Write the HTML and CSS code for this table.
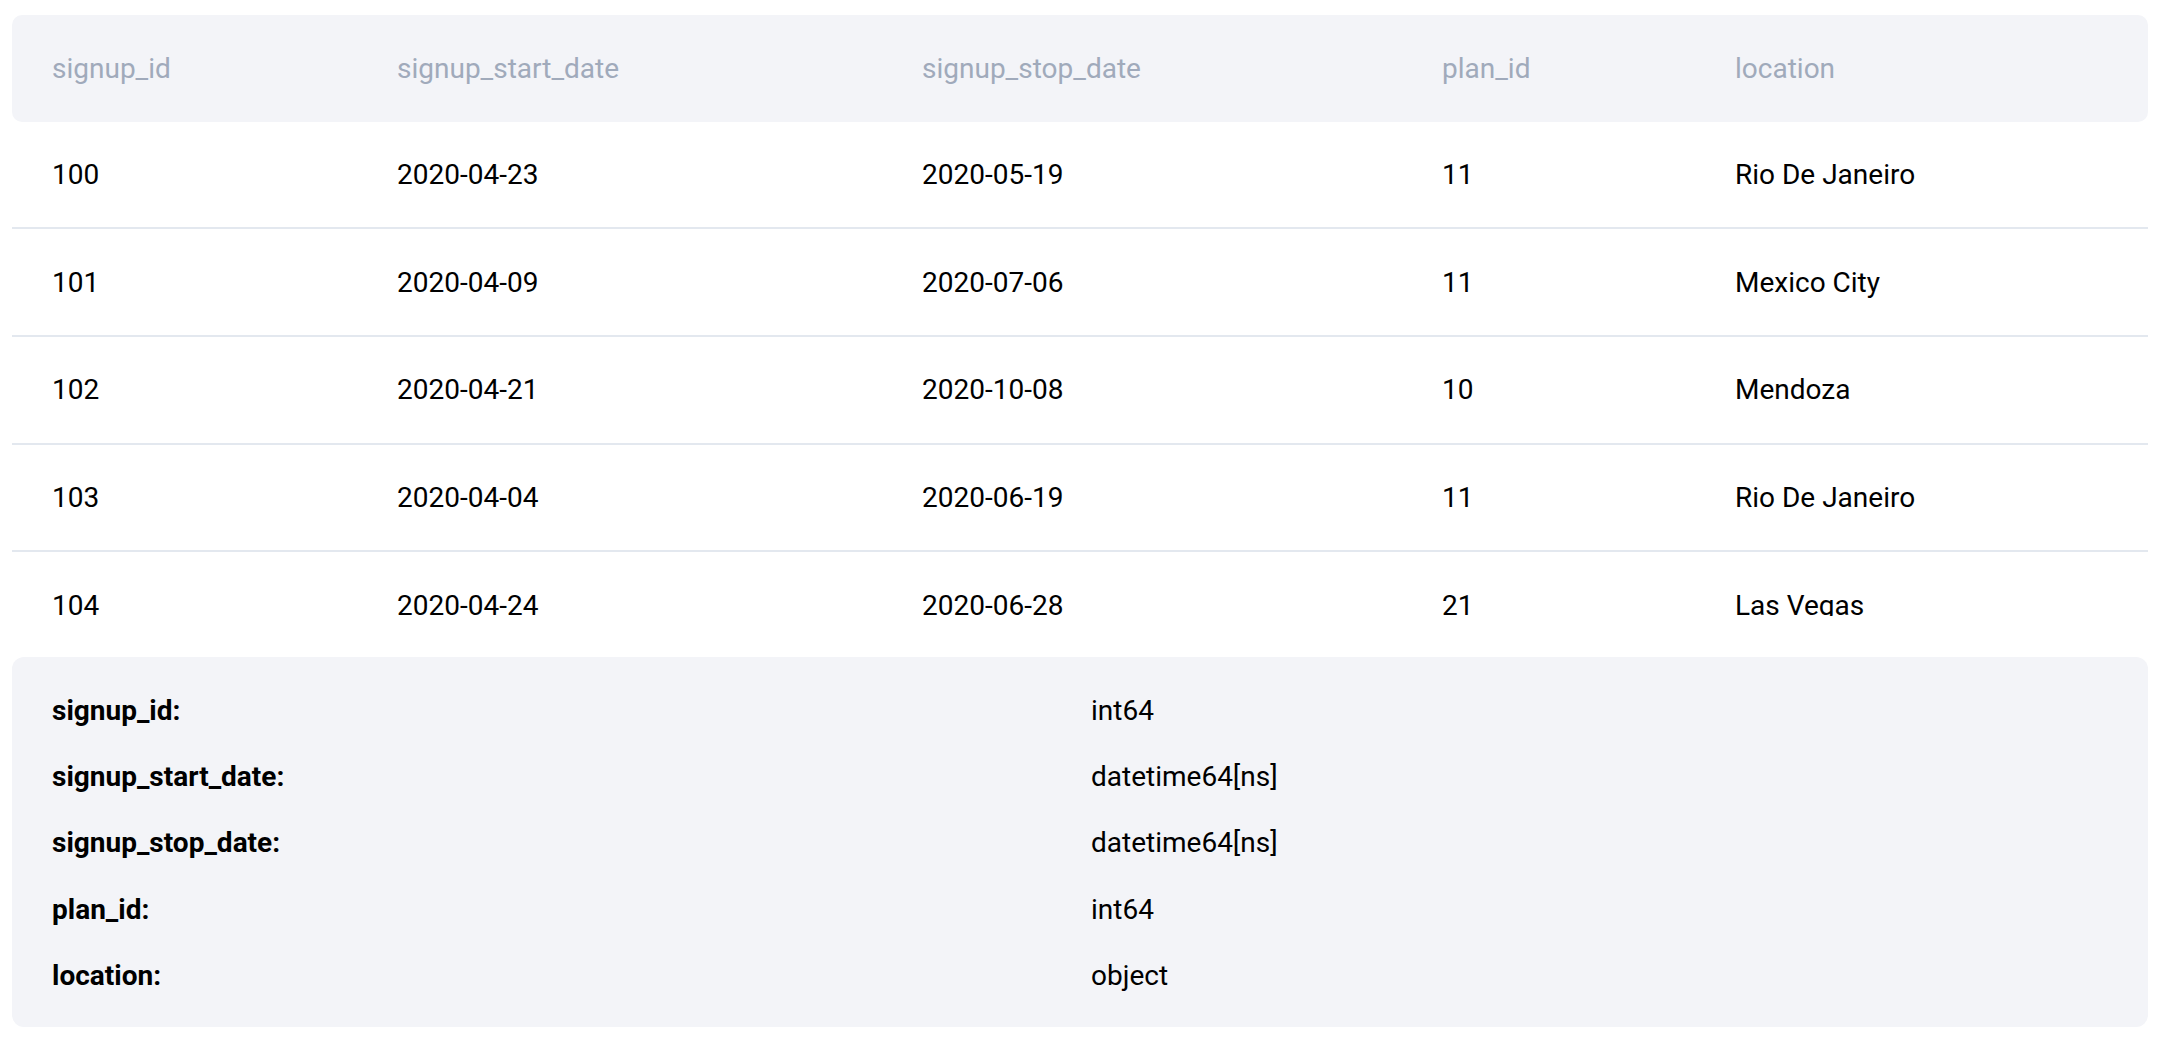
FILE: index.html
```html
<!DOCTYPE html>
<html lang="en">
  <head>
    <meta charset="UTF-8" />
    <meta name="viewport" content="width=device-width, initial-scale=1.0" />
    <title>signups</title>
    <link rel="stylesheet" href="styles.css">
  </head>

  <body>
    <div class="frame">
      <!-- 数据预览 -->
      <div class="table-wrap">
        <div class="row head">
          <div class="cell c1">signup_id</div>
          <div class="cell c2">signup_start_date</div>
          <div class="cell c3">signup_stop_date</div>
          <div class="cell c4">plan_id</div>
          <div class="cell c5">location</div>
        </div>
        <div class="row">
          <div class="cell c1">100</div>
          <div class="cell c2">2020-04-23</div>
          <div class="cell c3">2020-05-19</div>
          <div class="cell c4">11</div>
          <div class="cell c5">Rio De Janeiro</div>
        </div>
        <div class="row">
          <div class="cell c1">101</div>
          <div class="cell c2">2020-04-09</div>
          <div class="cell c3">2020-07-06</div>
          <div class="cell c4">11</div>
          <div class="cell c5">Mexico City</div>
        </div>
        <div class="row">
          <div class="cell c1">102</div>
          <div class="cell c2">2020-04-21</div>
          <div class="cell c3">2020-10-08</div>
          <div class="cell c4">10</div>
          <div class="cell c5">Mendoza</div>
        </div>
        <div class="row">
          <div class="cell c1">103</div>
          <div class="cell c2">2020-04-04</div>
          <div class="cell c3">2020-06-19</div>
          <div class="cell c4">11</div>
          <div class="cell c5">Rio De Janeiro</div>
        </div>
        <div class="row">
          <div class="cell c1">104</div>
          <div class="cell c2">2020-04-24</div>
          <div class="cell c3">2020-06-28</div>
          <div class="cell c4">21</div>
          <div class="cell c5">Las Vegas</div>
        </div>
      </div>

      <!-- 字段类型 -->
      <div class="dtypes">
        <div class="dt-row"><span class="dt-name">signup_id:</span><span>int64</span></div>
        <div class="dt-row"><span class="dt-name">signup_start_date:</span><span>datetime64[ns]</span></div>
        <div class="dt-row"><span class="dt-name">signup_stop_date:</span><span>datetime64[ns]</span></div>
        <div class="dt-row"><span class="dt-name">plan_id:</span><span>int64</span></div>
        <div class="dt-row"><span class="dt-name">location:</span><span>object</span></div>
      </div>
    </div>
  </body>
</html>
```

FILE: styles.css
```css
body,
html {
  margin: 0;
  padding: 0;
  background-color: #fff;
  font-family: Roboto, "Liberation Sans", sans-serif;
  color: #000;
}

.frame {
  width: 2136px;
  padding: 15px 0 0 12px;
}

.table-wrap {
  height: 601px;
  overflow: hidden;
}

.row {
  display: flex;
  align-items: center;
  height: 107.7px;
  box-sizing: border-box;
  border-bottom: 2px solid #e3e8ef;
  font-size: 28px;
}

.row.head {
  height: 106.5px;
  border-bottom: none;
  background-color: #f3f4f8;
  border-radius: 10px;
  color: #a0aabb;
}

.cell {
  padding-left: 40px;
  box-sizing: border-box;
  white-space: nowrap;
}

.c1 { width: 345px; }
.c2 { width: 525px; }
.c3 { width: 520px; }
.c4 { width: 293px; }
.c5 { flex: 1; }

/* 类型表 */
.dtypes {
  margin-top: 41px;
  background-color: #f3f4f8;
  border-radius: 12px;
  padding: 20px 40px 19px;
  font-size: 28px;
}

.dt-row {
  display: grid;
  grid-template-columns: 1039px 1fr;
  align-items: center;
  height: 66.3px;
}

.dt-name {
  font-weight: 700;
}
```
